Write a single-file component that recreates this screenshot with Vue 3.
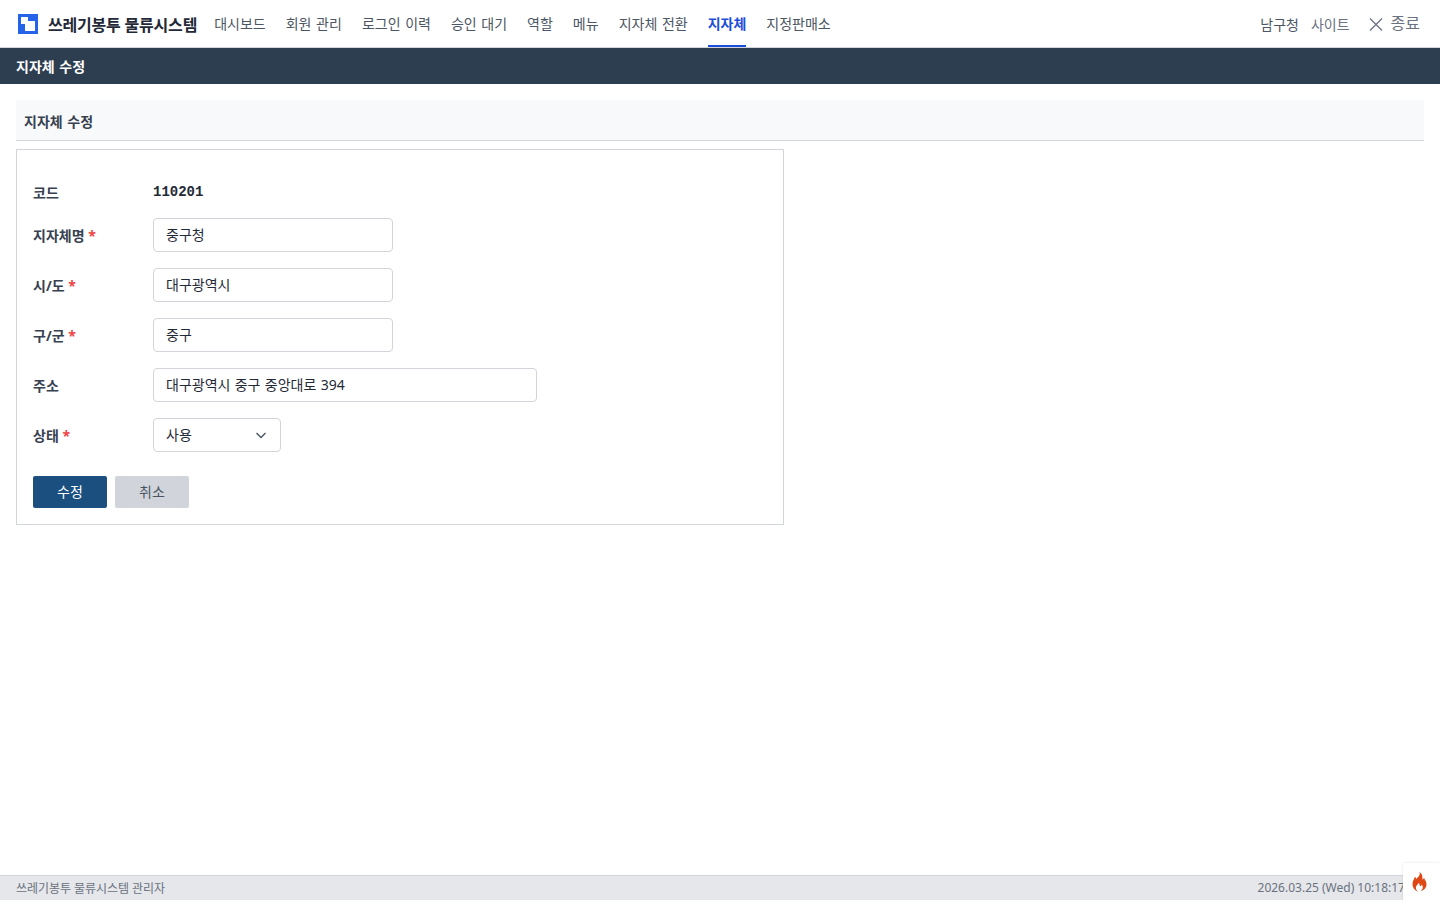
<script setup>
const nav = ['대시보드','회원 관리','로그인 이력','승인 대기','역할','메뉴','지자체 전환','지자체','지정판매소']
const fields = [
  { label: '지자체명', req: true, value: '중구청', cls: 'w240' },
  { label: '시/도', req: true, value: '대구광역시', cls: 'w240' },
  { label: '구/군', req: true, value: '중구', cls: 'w240' },
  { label: '주소', req: false, value: '대구광역시 중구 중앙대로 394', cls: 'w384' },
]
</script>

<template>
  <div class="page">
    <header class="top">
      <div class="brand">
        <svg class="logo" width="20" height="20" viewBox="0 0 20 20">
          <rect width="20" height="20" fill="#2563eb"/>
          <path d="M3 3h7v4h7v10H7v-7H3z" fill="#fff"/>
        </svg>
        <span class="brand-name">쓰레기봉투 물류시스템</span>
      </div>
      <nav class="nav">
        <a v-for="n in nav" :key="n" class="nav-item" :class="{ active: n === '지자체' }">{{ n }}</a>
      </nav>
      <div class="right">
        <span class="org">남구청</span>
        <span class="site">사이트</span>
        <span class="close">
          <svg width="14" height="14" viewBox="0 0 14 14"><path d="M1 1.500l12 12M13 1.500l-12 12" stroke="#6b7280" stroke-width="1.300" fill="none"/></svg>
          <span class="close-text">종료</span>
        </span>
      </div>
    </header>
    <div class="title-bar">지자체 수정</div>
    <main class="main">
      <div class="section-head">지자체 수정</div>
      <form class="card" @submit.prevent>
        <div class="row code-row">
          <label class="lbl">코드</label>
          <span class="code">110201</span>
        </div>
        <div v-for="f in fields" :key="f.label" class="row">
          <label class="lbl up">{{ f.label }}<span v-if="f.req" class="req"> *</span></label>
          <input class="inp" :class="f.cls" :value="f.value" />
        </div>
        <div class="row">
          <label class="lbl up">상태<span class="req"> *</span></label>
          <div class="sel">
            <span class="sel-text">사용</span>
            <svg width="12" height="12" viewBox="0 0 12 12"><path d="M1.500 4l4.500 4.500L10.500 4" stroke="#4b5563" stroke-width="1.400" fill="none"/></svg>
          </div>
        </div>
        <div class="btns">
          <button class="btn primary" type="button">수정</button>
          <button class="btn muted" type="button">취소</button>
        </div>
      </form>
    </main>
    <footer class="foot">
      <span class="foot-left">쓰레기봉투 물류시스템 관리자</span>
      <span class="time">2026.03.25 (Wed) 10:18:17</span>
    </footer>
    <div class="flame">
      <svg width="18" height="22" viewBox="0 0 18 22">
        <path d="M8.500 1c1 3-1 4.500-3 7-.5-1-.8-1.600-1.500-2.200C3.800 7.500 1.500 9.500 1.500 13c0 4 3 7 5.500 7.500-1.800-1.300-2.500-3-2-4.700.5-1.500 2-2.300 2.800-4 1.500 1.200 0 2.700 1.400 3.200 1 .3 1.300-.8 1.200-1.800 1.600 1.300 2 3.800.5 5.500-.4.500-.9.900-1.400 1.300 3.500-.6 6-3.400 6-6.800 0-3-1.800-4.500-2.500-6.500-.4.900-.7 1.500-1.500 2C11.500 6 11.500 3 8.500 1z" fill="#dd4814"/>
      </svg>
    </div>
  </div>
</template>

<style>
html, body { margin: 0; background: #fff; }
</style>

<style scoped>
.page {
  height: 900px;
  display: flex;
  flex-direction: column;
  position: relative;
  overflow: hidden;
  font-family: "Noto Sans", "Noto Sans CJK KR", sans-serif;
  color: #1f2937;
  font-size: 14px;
}
.top {
  height: 47px;
  display: flex;
  align-items: stretch;
  padding: 0 20px 0 18px;
  border-bottom: 1px solid #d1d5db;
  background: #fff;
}
.brand { display: flex; align-items: center; gap: 10px; margin-right: 17px; }
.logo { display: block; }
.brand-name { font-size: 16px; font-weight: 700; color: #1f2937; letter-spacing: -0.2px; }
.nav { display: flex; gap: 20px; }
.nav-item {
  display: flex;
  align-items: center;
  height: 47px;
  box-sizing: border-box;
  font-size: 14px;
  color: #4b5563;
  word-spacing: 1px;
  border-bottom: 2px solid transparent;
}
.nav-item.active { color: #1d4ed8; font-weight: 700; border-bottom-color: #1d4ed8; }
.right { margin-left: auto; display: flex; align-items: center; font-size: 14px; color: #6b7280; }
.org { color: #4b5563; margin-right: 12px; }
.site { color: #6b7280; margin-right: 19px; }
.close { display: flex; align-items: center; gap: 8px; font-size: 16px; color: #6b7280; }
.close-text { padding-bottom: 3px; }
.title-bar {
  height: 36px;
  background: #2c3e50;
  color: #fff;
  display: flex;
  align-items: center;
  padding: 0 16px;
  font-size: 14px;
  font-weight: 700;
  word-spacing: 1px;
}
.main { flex: 1; padding: 16px; }
.section-head {
  display: flex;
  align-items: center;
  padding: 1px 8px 0;
  height: 39px;
  background: #f8f9fa;
  border-bottom: 1px solid #d1d5db;
  font-weight: 700;
  font-size: 14px;
  color: #374151;
  word-spacing: 1px;
}
.card {
  margin-top: 8px;
  width: 768px;
  box-sizing: border-box;
  border: 1px solid #d1d5db;
  padding: 16px;
  display: flex;
  flex-direction: column;
  gap: 16px;
}
.row { display: flex; align-items: center; height: 34px; }
.code-row { height: 20px; margin-top: 16px; }
.lbl { width: 120px; font-weight: 700; font-size: 14px; color: #374151; }
.up { padding-bottom: 1px; }
.req { color: #ef4444; }
.code { font-family: "Liberation Mono", monospace; font-weight: 700; font-size: 14px; color: #1f2937; }
.inp {
  height: 34px;
  box-sizing: border-box;
  border: 1px solid #d1d5db;
  border-radius: 4px;
  padding: 0 12px 2px;
  font: inherit;
  font-size: 14px;
  word-spacing: 0.7px;
  color: #1f2937;
  outline: none;
}
.w240 { width: 240px; }
.w384 { width: 384px; }
.sel {
  width: 128px;
  height: 34px;
  box-sizing: border-box;
  border: 1px solid #d1d5db;
  border-radius: 4px;
  padding: 0 13px 0 12px;
  display: flex;
  align-items: center;
  justify-content: space-between;
}
.sel-text { padding-bottom: 2px; }
.btns { display: flex; gap: 8px; margin-top: 8px; }
.btn {
  width: 74px;
  height: 32px;
  border: none;
  border-radius: 2px;
  padding: 0 0 2px;
  font: inherit;
  font-size: 14px;
}
.primary { background: #1a4f80; color: #fff; }
.muted { background: #d1d5db; color: #4b5563; }
.foot {
  height: 25px;
  box-sizing: border-box;
  background: #e5e7eb;
  border-top: 1px solid #d1d5db;
  padding: 0 16px 1px;
  display: flex;
  align-items: center;
  justify-content: space-between;
  font-size: 12px;
  color: #6b7280;
  white-space: nowrap;
}
.foot-left { letter-spacing: -0.05px; }
.time { margin-right: 19px; }
.flame {
  position: absolute;
  right: 0;
  bottom: 0;
  width: 37px;
  height: 37px;
  padding-right: 4px;
  box-sizing: border-box;
  background: #fff;
  box-shadow: 0 0 2px rgba(0, 0, 0, 0.12);
  display: flex;
  align-items: center;
  justify-content: center;
}
</style>
